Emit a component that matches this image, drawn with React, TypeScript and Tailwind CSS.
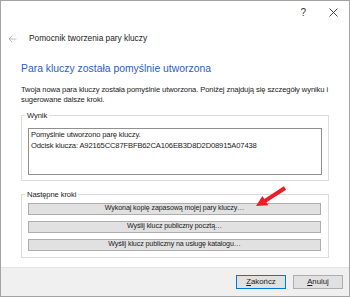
// Key pair wizard, "done" page

const font = "font-['Liberation_Sans',Arial,sans-serif]";

function GroupBox({ label, top, children }: { label: string; top: string; children: React.ReactNode }) {
  return (
    <fieldset className={`mx-[20px] border border-[#dcdcdc] px-[6px] pb-[5px] ${top}`}>
      <legend className="ml-[-3px] px-[2px] text-[7.6px] leading-[11px] tracking-[-0.1px] text-[#1a1a1a]">{label}</legend>
      {children}
    </fieldset>
  );
}

function StepButton({ children }: { children: React.ReactNode }) {
  return (
    <div className="flex h-[12px] items-center justify-center border border-[#adadad] bg-[#e1e1e1] text-[7.1px] leading-none tracking-[-0.1px] text-[#1a1a1a]">
      {children}
    </div>
  );
}

export default function App() {
  return (
    <div className={`relative flex h-[297px] w-[350px] flex-col border border-[#a3a3a3] bg-white ${font}`}>
      {/* Title bar */}
      <div className="flex h-[23px] items-center justify-end pr-[11px]">
        <span className="mr-[23px] text-[10px] leading-none text-[#333]">?</span>
        <svg width="9" height="9" viewBox="0 0 9 9" className="text-[#333]">
          <path d="M0.5 0.5 L8.5 8.5 M8.5 0.5 L0.5 8.5" stroke="currentColor" strokeWidth="0.9" fill="none" />
        </svg>
      </div>

      {/* Header */}
      <div className="flex h-[29px] items-center pl-[7px]">
        <svg width="9" height="8" viewBox="0 0 9 8" className="text-[#b5b5b5]">
          <path d="M8.5 4 H1 M4.2 0.8 L1 4 L4.2 7.2" stroke="currentColor" strokeWidth="0.9" fill="none" />
        </svg>
        <span className="ml-[12px] text-[8.3px] leading-none text-[#1a1a1a]">Pomocnik tworzenia pary kluczy</span>
      </div>

      {/* Content */}
      <div className="flex flex-1 flex-col">
        <h1 className="mt-[9px] px-[20px] text-[10.4px] leading-[14px] text-[#1f5fc4]">
          Para kluczy została pomyślnie utworzona
        </h1>
        <p className="mt-[9px] pl-[20px] pr-[12px] text-[7.6px] leading-[10px] tracking-[-0.1px] text-[#1a1a1a]">
          Twoja nowa para kluczy została pomyślnie utworzona. Poniżej znajdują się szczegóły wyniku i sugerowane
          dalsze kroki.
        </p>

        <div className="mt-[5px]">
          <GroupBox label="Wynik" top="pt-[7px]">
            <div className="h-[47px] border border-[#8f8f8f] px-[2px] pt-[0px] text-[7.6px] leading-[11px] tracking-[-0.15px] text-[#1a1a1a]">
              <div>Pomyślnie utworzono parę kluczy.</div>
              <div>Odcisk klucza: A92165CC87FBFB62CA106EB3D8D2D08915A07438</div>
            </div>
          </GroupBox>
        </div>

        <div className="mt-[8px]">
          <GroupBox label="Następne kroki" top="pt-[1px]">
            <div className="flex flex-col gap-[6px] pt-[2px] pr-[1px] pb-[1px]">
              <StepButton>Wykonaj kopię zapasową mojej pary kluczy…</StepButton>
              <StepButton>Wyślij klucz publiczny pocztą…</StepButton>
              <StepButton>Wyślij klucz publiczny na usługę katalogu…</StepButton>
            </div>
          </GroupBox>
        </div>
      </div>

      {/* Footer */}
      <div className="flex h-[29px] items-center justify-end gap-[7px] border-t border-[#e3e3e3] bg-[#f0f0f0] pr-[6px]">
        <div className="flex h-[14px] w-[50px] items-center justify-center border border-[#0078d7] bg-[#e1e1e1] text-[7.8px] leading-none text-[#1a1a1a]">
          <span>
            <span className="underline">Z</span>akończ
          </span>
        </div>
        <div className="flex h-[14px] w-[50px] items-center justify-center border border-[#adadad] bg-[#e1e1e1] text-[7.8px] leading-none text-[#1a1a1a]">
          <span>
            <span className="underline">A</span>nuluj
          </span>
        </div>
      </div>

      {/* Annotation arrow */}
      <svg className="pointer-events-none absolute left-[-1px] top-[-1px]" width="350" height="297" viewBox="0 0 350 297">
        <polygon
          points="256,206 268.4,205.2 266.5,202.3 286.1,189.7 283.9,186.3 264.3,198.9 262.4,196"
          fill="#ee1c25"
        />
      </svg>
    </div>
  );
}
